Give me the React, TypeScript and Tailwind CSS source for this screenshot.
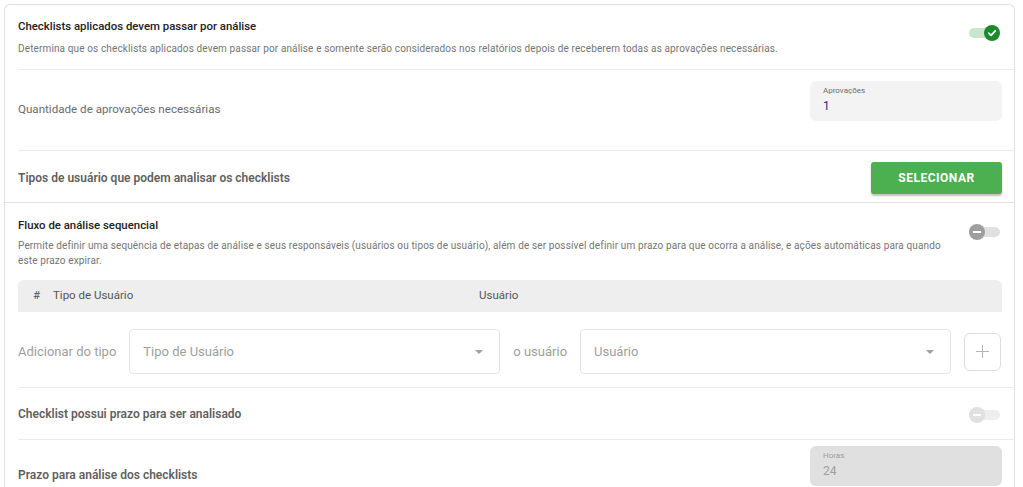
import React from 'react';

function Toggle({ on, disabled }: { on?: boolean; disabled?: boolean }) {
  const track = on ? 'bg-[#c8e6c9]' : disabled ? 'bg-[#eeeeee]' : 'bg-[#e0e0e0]';
  const thumb = on ? 'bg-[#1b8a2a] right-0' : disabled ? 'bg-[#e0e0e0] left-0' : 'bg-[#9e9e9e] left-0';
  return (
    <div className="relative w-8 h-4 shrink-0">
      <div className={`absolute top-[3px] h-[10px] left-[1px] right-[1px] rounded-full ${track}`} />
      <div className={`absolute top-0 w-4 h-4 rounded-full flex items-center justify-center ${thumb}`}>
        {on ? (
          <svg width="10" height="10" viewBox="0 0 10 10">
            <path d="M1.8 5.2 L4 7.3 L8.3 2.8" fill="none" stroke="white" strokeWidth="1.8" strokeLinecap="round" strokeLinejoin="round" />
          </svg>
        ) : (
          <div className="w-2 h-[2px] bg-white" />
        )}
      </div>
    </div>
  );
}

function Caret() {
  return (
    <svg width="8" height="4" viewBox="0 0 8 4" className="shrink-0">
      <path d="M0 0 L8 0 L4 4 Z" fill="#a0a0a0" />
    </svg>
  );
}

function Field({ label, value, disabled }: { label: string; value: string; disabled?: boolean }) {
  return (
    <div className={`w-[192px] h-10 rounded-md pl-[13px] pt-[5px] ${disabled ? 'bg-[#e0e0e0]' : 'bg-[#f3f3f3]'}`}>
      <div className={`text-[8px] leading-[10px] ${disabled ? 'text-[#9e9e9e]' : 'text-[#6b6b6b]'}`}>{label}</div>
      <div className={`text-[12px] leading-[16px] mt-[2px] ${disabled ? 'text-[#9e9e9e]' : 'text-[#22307a]'}`}>{value}</div>
    </div>
  );
}

export default function App() {
  return (
    <div className="bg-white w-[1023px] h-[487px] overflow-hidden pt-1 pl-1 pr-2" style={{ fontFamily: 'Roboto, "Liberation Sans", sans-serif' }}>
      <div className="border border-b-0 border-[#e0e0e0] rounded-t-md h-[600px]">
        {/* Checklists aplicados */}
        <div className="ml-[13px] border-b border-[#eaeaea] flex items-start pt-[13px] pb-[13px]">
          <div className="flex-1">
            <div className="text-[11.4px] leading-4 font-medium text-[#212121]">Checklists aplicados devem passar por análise</div>
            <div className="text-[10px] leading-[15px] tracking-[0.13px] text-[#757575] mt-[7px]">
              Determina que os checklists aplicados devem passar por análise e somente serão considerados nos relatórios depois de receberem todas as aprovações necessárias.
            </div>
          </div>
          <div className="mt-[7px] mr-[14px]">
            <Toggle on />
          </div>
        </div>

        {/* Quantidade */}
        <div className="ml-[13px] border-b border-[#eaeaea] flex items-center">
          <div className="flex-1 text-[11.6px] text-[#6b6b6b]">Quantidade de aprovações necessárias</div>
          <div className="pt-[11px] pb-[29px] mr-3">
            <Field label="Aprovações" value="1" />
          </div>
        </div>

        {/* Tipos de usuário */}
        <div className="pl-[13px] pr-3 border-b border-[#e0e0e0] flex items-center pt-[11px] pb-2">
          <div className="flex-1 text-[12px] font-semibold text-[#5f5f5f]">Tipos de usuário que podem analisar os checklists</div>
          <button className="w-[131px] h-8 rounded-[3px] bg-[#4caf50] text-white text-[12px] font-bold tracking-[0.5px] shadow-[0_2px_2px_rgba(0,0,0,0.25)]">
            SELECIONAR
          </button>
        </div>

        {/* Fluxo de análise */}
        <div className="ml-[13px] border-b border-[#eaeaea] pt-[14px]">
          <div className="flex items-start">
            <div className="flex-1">
              <div className="text-[11.4px] leading-4 font-medium text-[#212121]">Fluxo de análise sequencial</div>
              <div className="text-[10px] leading-[15px] tracking-[0.13px] text-[#757575] mt-[5px]">
                Permite definir uma sequência de etapas de análise e seus responsáveis (usuários ou tipos de usuário), além de ser possível definir um prazo para que ocorra a análise, e ações automáticas para quando este prazo expirar.
              </div>
            </div>
            <div className="mt-[7px] ml-[14px] mr-[13px]">
              <Toggle />
            </div>
          </div>

          <div className="mr-3 mt-3 h-8 bg-[#eeeeee] rounded-t-md flex items-center text-[11.5px] text-[#555555]">
            <div className="w-[35px] pl-[15px]">#</div>
            <div className="w-[426px]">Tipo de Usuário</div>
            <div>Usuário</div>
          </div>

          <div className="mr-[13px] flex items-center gap-[13px] pt-[17px] pb-[13px] text-[13px] text-[#9e9e9e]">
            <div>Adicionar do tipo</div>
            <div className="flex-1 h-[45px] border border-[#e6e6e6] rounded flex items-center pl-[13px] pr-4">
              <div className="flex-1">Tipo de Usuário</div>
              <Caret />
            </div>
            <div>o usuário</div>
            <div className="flex-1 h-[45px] border border-[#e6e6e6] rounded flex items-center pl-[13px] pr-4">
              <div className="flex-1">Usuário</div>
              <Caret />
            </div>
            <div className="w-[37px] h-[38px] border border-[#dddddd] rounded-md flex items-center justify-center">
              <svg width="13" height="13" viewBox="0 0 13 13">
                <path d="M6.5 0 V13 M0 6.5 H13" stroke="#b5b5b5" strokeWidth="1" />
              </svg>
            </div>
          </div>
        </div>

        {/* Checklist possui prazo */}
        <div className="ml-[13px] border-b border-[#eaeaea] flex items-center h-[52px]">
          <div className="flex-1 text-[12px] font-semibold text-[#5f5f5f]">Checklist possui prazo para ser analisado</div>
          <div className="mr-[13px] mt-[2px]">
            <Toggle disabled />
          </div>
        </div>

        {/* Prazo */}
        <div className="ml-[13px] flex items-center">
          <div className="flex-1 text-[12px] font-semibold text-[#5f5f5f]">Prazo para análise dos checklists</div>
          <div className="pt-[6px] pb-6 mr-3">
            <Field label="Horas" value="24" disabled />
          </div>
        </div>
      </div>
    </div>
  );
}
